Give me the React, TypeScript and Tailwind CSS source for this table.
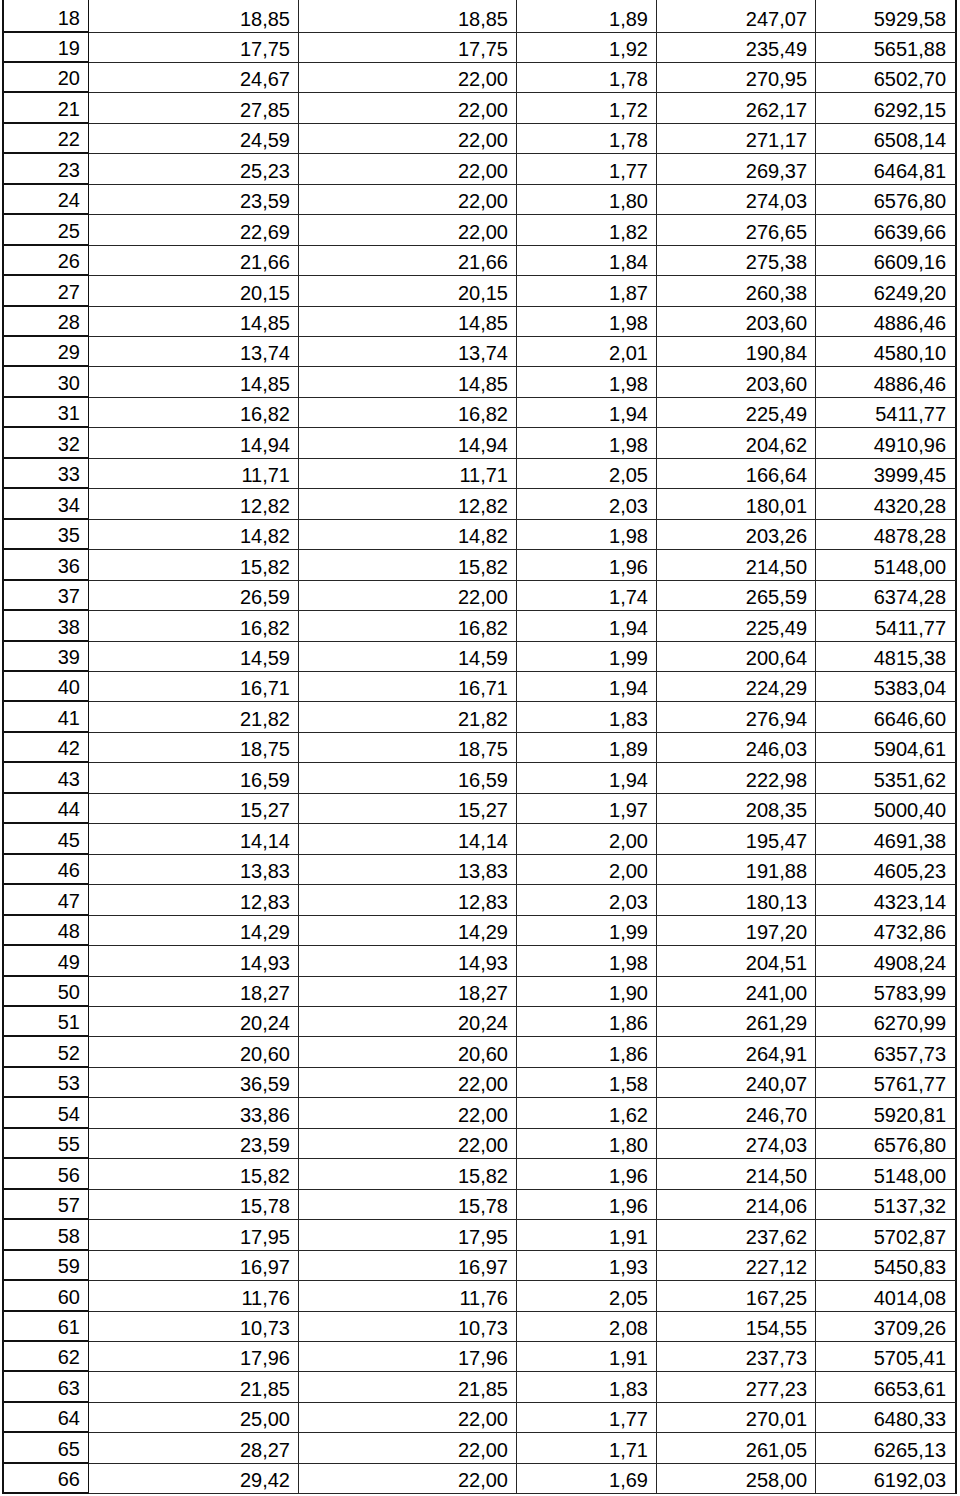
const rows = `18 18,85 18,85 1,89 247,07 5929,58
19 17,75 17,75 1,92 235,49 5651,88
20 24,67 22,00 1,78 270,95 6502,70
21 27,85 22,00 1,72 262,17 6292,15
22 24,59 22,00 1,78 271,17 6508,14
23 25,23 22,00 1,77 269,37 6464,81
24 23,59 22,00 1,80 274,03 6576,80
25 22,69 22,00 1,82 276,65 6639,66
26 21,66 21,66 1,84 275,38 6609,16
27 20,15 20,15 1,87 260,38 6249,20
28 14,85 14,85 1,98 203,60 4886,46
29 13,74 13,74 2,01 190,84 4580,10
30 14,85 14,85 1,98 203,60 4886,46
31 16,82 16,82 1,94 225,49 5411,77
32 14,94 14,94 1,98 204,62 4910,96
33 11,71 11,71 2,05 166,64 3999,45
34 12,82 12,82 2,03 180,01 4320,28
35 14,82 14,82 1,98 203,26 4878,28
36 15,82 15,82 1,96 214,50 5148,00
37 26,59 22,00 1,74 265,59 6374,28
38 16,82 16,82 1,94 225,49 5411,77
39 14,59 14,59 1,99 200,64 4815,38
40 16,71 16,71 1,94 224,29 5383,04
41 21,82 21,82 1,83 276,94 6646,60
42 18,75 18,75 1,89 246,03 5904,61
43 16,59 16,59 1,94 222,98 5351,62
44 15,27 15,27 1,97 208,35 5000,40
45 14,14 14,14 2,00 195,47 4691,38
46 13,83 13,83 2,00 191,88 4605,23
47 12,83 12,83 2,03 180,13 4323,14
48 14,29 14,29 1,99 197,20 4732,86
49 14,93 14,93 1,98 204,51 4908,24
50 18,27 18,27 1,90 241,00 5783,99
51 20,24 20,24 1,86 261,29 6270,99
52 20,60 20,60 1,86 264,91 6357,73
53 36,59 22,00 1,58 240,07 5761,77
54 33,86 22,00 1,62 246,70 5920,81
55 23,59 22,00 1,80 274,03 6576,80
56 15,82 15,82 1,96 214,50 5148,00
57 15,78 15,78 1,96 214,06 5137,32
58 17,95 17,95 1,91 237,62 5702,87
59 16,97 16,97 1,93 227,12 5450,83
60 11,76 11,76 2,05 167,25 4014,08
61 10,73 10,73 2,08 154,55 3709,26
62 17,96 17,96 1,91 237,73 5705,41
63 21,85 21,85 1,83 277,23 6653,61
64 25,00 22,00 1,77 270,01 6480,33
65 28,27 22,00 1,71 261,05 6265,13
66 29,42 22,00 1,69 258,00 6192,03`
    .split("\n")
    .map((line) => line.split(" "));

// widths include the right border of each cell
const cellBase = "flex items-end justify-end pr-[8px] pb-[1px] border-b border-r border-[#262626]";

export default function App() {
    return (
        <div className="bg-white pl-[2px] text-black text-[20px] leading-[23px]" style={{ fontFamily: '"Liberation Sans", Arial, sans-serif' }}>
            {rows.map((r, i) => (
                <div key={r[0]} className={`flex ${i === 0 ? "h-[32.5px]" : "h-[30.46px]"}`}>
                    <div className="w-[87px] flex items-end justify-end pr-[8px] pb-[1px] border-l-2 border-r border-b-2 border-[#111]">
                        {r[0]}
                    </div>
                    <div className={`w-[210px] ${cellBase}`}>{r[1]}</div>
                    <div className={`w-[218px] ${cellBase}`}>{r[2]}</div>
                    <div className={`w-[140px] ${cellBase}`}>{r[3]}</div>
                    <div className={`w-[159px] ${cellBase}`}>{r[4]}</div>
                    <div className="w-[141px] flex items-end justify-end pr-[9px] pb-[1px] border-b border-[#262626] border-r-2 border-r-[#111]">
                        {r[5]}
                    </div>
                </div>
            ))}
        </div>
    );
}
